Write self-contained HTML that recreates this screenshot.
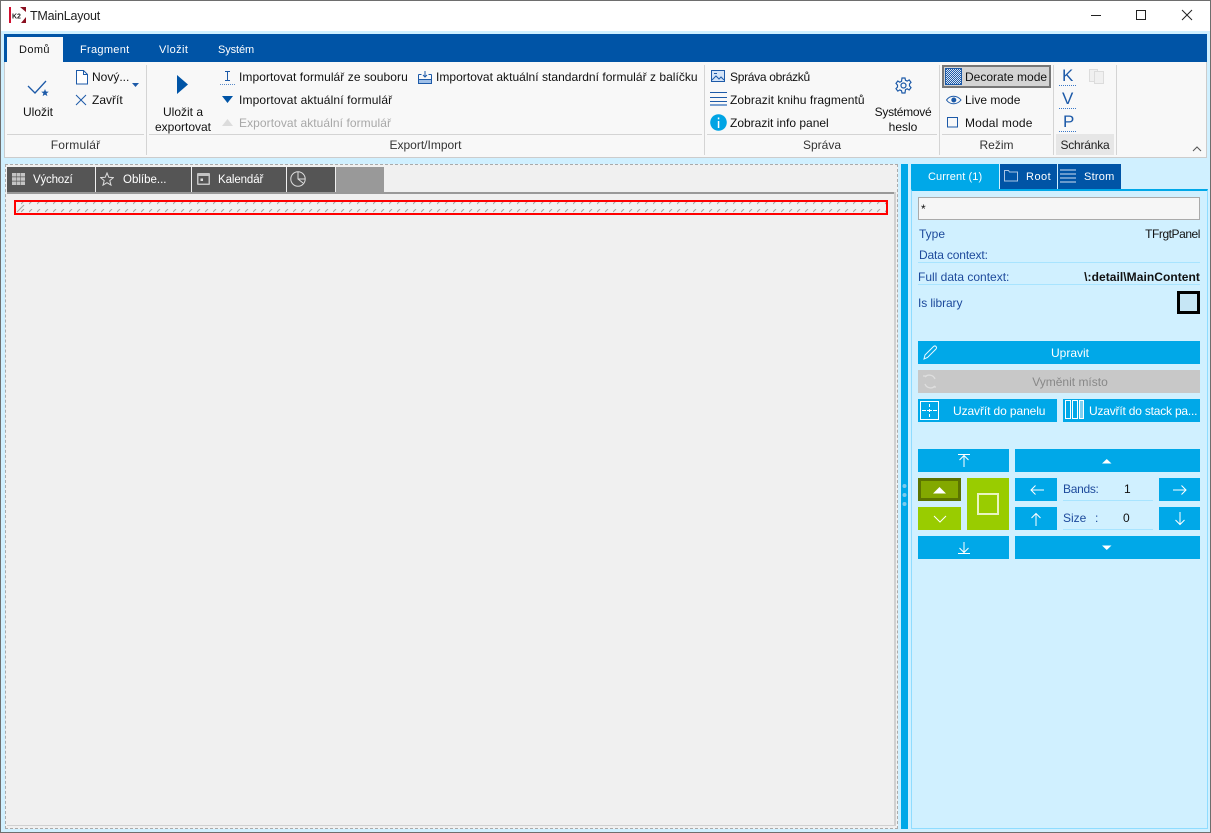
<!DOCTYPE html>
<html><head><meta charset="utf-8"><title>TMainLayout</title>
<style>
html,body{margin:0;padding:0}
body{width:1211px;height:833px;position:relative;overflow:hidden;background:#d0f0ff;font:12px "Liberation Sans",sans-serif;color:#111}
.b,.t,svg{position:absolute}
.t{white-space:nowrap;line-height:16px;height:16px}
.c{text-align:center}
.w{color:#fff}
.l{color:#1d4a9c}
.d{color:#a8a8a8}
</style></head><body>
<div class="b" style="left:0;top:0;width:1209px;height:831px;border:1px solid #6e6e6e"></div>
<div class="b" style="left:1px;top:1px;width:1209px;height:30px;background:#fff"></div>
<svg style="left:9px;top:7px" width="17" height="16"><rect width="2" height="16" fill="#d01030"/><rect x="2" width="15" height="16" fill="#fff"/><path d="M11 0h6v5zM12 16h5v-6z" fill="#8a1020"/><text x="3" y="11.500" font-family="Liberation Sans" font-weight="bold" font-size="7" fill="#222">K2</text></svg>
<div class="t" style="left:30px;top:8px;font-size:12.500px;color:#222;letter-spacing:-.2px">TMainLayout</div>
<svg style="left:1085px;top:5px" width="116" height="20" fill="none" stroke="#222"><path d="M6 10.500h10"/><rect x="51.500" y="5.500" width="9" height="9"/><path d="M97 5l10 10M107 5l-10 10"/></svg>

<!-- ribbon -->
<div class="b" style="left:4px;top:34px;width:1203px;height:28px;background:#0054a6"></div>
<div class="b" style="left:7px;top:37px;width:56px;height:25px;background:#f8f8f8"></div>
<div class="b" style="left:4px;top:62px;width:1203px;height:95px;background:#f8f8f8;border-bottom:1px solid #ccc"></div>
<div class="b" style="left:4px;top:62px;width:1px;height:96px;background:#ccc"></div>
<div class="b" style="left:1206px;top:62px;width:1px;height:96px;background:#ccc"></div>
<div class="t" style="left:19px;top:42px;font-size:11px;color:#111;letter-spacing:.4px">Domů</div>
<div class="t w" style="left:80px;top:42px;font-size:11px;letter-spacing:.3px">Fragment</div>
<div class="t w" style="left:159px;top:42px;font-size:11px;letter-spacing:.4px">Vložit</div>
<div class="t w" style="left:218px;top:42px;font-size:11px;letter-spacing:-.1px">Systém</div>

<!-- group separators -->
<div class="b" style="left:146px;top:65px;width:1px;height:90px;background:#d4d4d4"></div>
<div class="b" style="left:704px;top:65px;width:1px;height:90px;background:#d4d4d4"></div>
<div class="b" style="left:939px;top:65px;width:1px;height:90px;background:#d4d4d4"></div>
<div class="b" style="left:1053px;top:65px;width:1px;height:90px;background:#d4d4d4"></div>
<div class="b" style="left:1116px;top:65px;width:1px;height:90px;background:#d4d4d4"></div>
<div class="b" style="left:7px;top:134px;width:137px;height:1px;background:#d4d4d4"></div>
<div class="b" style="left:149px;top:134px;width:553px;height:1px;background:#d4d4d4"></div>
<div class="b" style="left:707px;top:134px;width:230px;height:1px;background:#d4d4d4"></div>
<div class="b" style="left:942px;top:134px;width:109px;height:1px;background:#d4d4d4"></div>
<div class="b" style="left:1056px;top:134px;width:58px;height:21px;background:#e6e6e6"></div>

<div class="t c" style="left:7px;top:137px;width:137px;color:#333;letter-spacing:.2px">Formulář</div>
<div class="t c" style="left:149px;top:137px;width:553px;color:#333">Export/Import</div>
<div class="t c" style="left:707px;top:137px;width:230px;color:#333">Správa</div>
<div class="t c" style="left:942px;top:137px;width:109px;color:#333">Režim</div>
<div class="t c" style="left:1056px;top:137px;width:58px;color:#222;letter-spacing:-.2px">Schránka</div>
<svg style="left:1191px;top:143px" width="12" height="10" fill="none" stroke="#555"><path d="M2 8l4-4 4 4"/></svg>

<!-- Formular -->
<svg style="left:26px;top:78px" width="26" height="20" fill="none"><path d="M2 8l7 7L20 3" stroke="#1d5aa8" stroke-width="1.300"/><path d="M19 11l1 2.500 2.800.200-2.200 1.700.8 2.700-2.400-1.500-2.400 1.500.8-2.700-2.200-1.700 2.800-.200z" fill="#1d5aa8"/></svg>
<div class="t c" style="left:8px;top:104px;width:60px">Uložit</div>
<svg style="left:75px;top:70px" width="14" height="15" fill="#fff" stroke="#1d5aa8"><path d="M1.500.5h7l4 4v9.500h-11z"/><path d="M8.500.5v4h4" fill="none"/></svg>
<div class="t" style="left:92px;top:69px">Nový...</div>
<svg style="left:132px;top:83px" width="8" height="5"><path d="M0 0h7l-3.500 4z" fill="#1d5aa8"/></svg>
<svg style="left:75px;top:94px" width="12" height="12" stroke="#1d5aa8" fill="none"><path d="M1 1l10 10M11 1L1 11"/></svg>
<div class="t" style="left:92px;top:92px">Zavřít</div>

<!-- Export -->
<svg style="left:176px;top:75px" width="13" height="20"><path d="M1 0l11 9.500L1 19z" fill="#0054a6"/></svg>
<div class="t c" style="left:148px;top:104px;width:70px">Uložit a</div>
<div class="t c" style="left:148px;top:119px;width:70px">exportovat</div>
<svg style="left:220px;top:70px" width="16" height="16" fill="none"><path d="M5 1.500h5M7.500 1.500v9M5 10.500h5" stroke="#1d5aa8"/><path d="M0 14.500h15" stroke="#5a8ac8" stroke-dasharray="1 1"/></svg>
<div class="t" style="left:239px;top:69px;letter-spacing:.07px">Importovat formulář ze souboru</div>
<svg style="left:222px;top:96px" width="12" height="8"><path d="M0 0h11l-5.500 7z" fill="#0054a6"/></svg>
<div class="t" style="left:239px;top:92px;letter-spacing:.14px">Importovat aktuální formulář</div>
<svg style="left:222px;top:119px" width="12" height="8"><path d="M0 7h11L5.500 0z" fill="#dcdcdc"/></svg>
<div class="t d" style="left:239px;top:115px;letter-spacing:.07px">Exportovat aktuální formulář</div>
<svg style="left:418px;top:70px" width="14" height="14" fill="none" stroke="#1d5aa8"><path d="M.5 4.500h3M13.500 4.500h-3M.5 4.500v9h13v-9"/><rect x="1" y="10" width="12" height="3" fill="#a0c0e8" stroke="none"/><path d="M.5 9.500h13M7 1v6M5 5l2 2 2-2"/></svg>
<div class="t" style="left:436px;top:69px;letter-spacing:.03px">Importovat aktuální standardní formulář z balíčku</div>

<!-- Sprava -->
<svg style="left:711px;top:70px" width="15" height="13" fill="#d4e4f8" stroke="#1d5aa8"><rect x=".5" y=".5" width="13" height="11"/><path d="M1 10l4-4 3 3 2-2 3 3" fill="none"/><path d="M3 3.500h3" fill="none"/></svg>
<div class="t" style="left:730px;top:69px;letter-spacing:-.3px">Správa obrázků</div>
<svg style="left:710px;top:92px" width="18" height="15"><path d="M0 .5h17" stroke="#1d5aa8"/><path d="M0 5.500h17" stroke="#1d5aa8"/><path d="M0 9.500h17" stroke="#1d5aa8"/><path d="M0 13h17" stroke="#7aa0d0" stroke-width="2"/></svg>
<div class="t" style="left:730px;top:92px;letter-spacing:.08px">Zobrazit knihu fragmentů</div>
<svg style="left:710px;top:114px" width="17" height="17"><circle cx="8.500" cy="8.500" r="8.300" fill="#00a4e4"/><rect x="7.800" y="7" width="1.500" height="7" fill="#fff"/><rect x="7.800" y="3.500" width="1.500" height="1.800" fill="#fff"/></svg>
<div class="t" style="left:730px;top:115px">Zobrazit info panel</div>
<svg style="left:895px;top:77px" width="17" height="17" fill="none" stroke="#1d5aa8" stroke-width="1.200"><circle cx="8.500" cy="8.500" r="2.500"/><path d="M7 1h3l.5 2.300 1.700.8 2-1.200 1.800 2.400-1.500 1.700v1.900l1.500 1.700-1.800 2.400-2-1.200-1.700.8L10 16H7l-.5-2.300-1.700-.8-2 1.200L1 11.700l1.500-1.700V8.100L1 6.400l1.800-2.400 2 1.200 1.700-.8z"/></svg>
<div class="t c" style="left:868px;top:104px;width:70px;letter-spacing:-.3px">Systémové</div>
<div class="t c" style="left:868px;top:119px;width:70px">heslo</div>

<!-- Rezim -->
<div class="b" style="left:942px;top:65px;width:105px;height:19px;background:#d4d4d4;border:2px solid #777"></div>
<svg style="left:945px;top:68px" width="17" height="17"><defs><pattern id="p" width="2" height="2" patternUnits="userSpaceOnUse"><rect width="2" height="2" fill="#d8e4f4"/><rect width="1" height="1" fill="#1d5aa8"/><rect x="1" y="1" width="1" height="1" fill="#1d5aa8"/></pattern></defs><rect x=".5" y=".5" width="16" height="16" fill="url(#p)" stroke="#1d5aa8"/></svg>
<div class="t" style="left:965px;top:69px">Decorate mode</div>
<svg style="left:946px;top:94px" width="16" height="12" fill="none" stroke="#1d5aa8"><path d="M.5 6C4 1 11 1 15 6 11 11 4 11 .5 6z"/><circle cx="7.800" cy="6" r="2" fill="#1d5aa8"/></svg>
<div class="t" style="left:965px;top:92px">Live mode</div>
<svg style="left:947px;top:117px" width="12" height="11"><rect x=".5" y=".5" width="10" height="9.500" fill="none" stroke="#1d5aa8"/></svg>
<div class="t" style="left:965px;top:115px;letter-spacing:.15px">Modal mode</div>

<!-- Schranka -->
<div class="t" style="left:1062px;top:68px;font-size:17px;color:#1d5aa8">K</div>
<div class="t" style="left:1062px;top:91px;font-size:17px;color:#1d5aa8">V</div>
<div class="t" style="left:1063px;top:114px;font-size:17px;color:#1d5aa8">P</div>
<svg style="left:1059px;top:85px" width="18" height="48" stroke="#3a78c8" fill="none" stroke-dasharray="1 1"><path d="M0 .5h17M0 23.500h17M0 46.500h17"/></svg>
<svg style="left:1089px;top:69px" width="16" height="15" fill="#f0f0f0" stroke="#dcdcdc"><rect x=".5" y=".5" width="8" height="12"/><rect x="5.500" y="2.500" width="9" height="12"/></svg>

<!-- Left panel -->
<div class="b" style="left:5px;top:164px;width:891px;height:663px;background:#f0f0f0;border:1px dashed #aaa"></div>
<div class="b" style="left:7px;top:192px;width:888px;height:2px;background:#999"></div>
<div class="b" style="left:894px;top:192px;width:2px;height:634px;background:#d0d0d0"></div>
<div class="b" style="left:7px;top:825px;width:888px;height:1px;background:#d0d0d0"></div>
<div class="b" style="left:7px;top:167px;width:88px;height:25px;background:#555"></div>
<div class="b" style="left:96px;top:167px;width:95px;height:25px;background:#555"></div>
<div class="b" style="left:192px;top:167px;width:94px;height:25px;background:#555"></div>
<div class="b" style="left:287px;top:167px;width:48px;height:25px;background:#555"></div>
<div class="b" style="left:336px;top:167px;width:48px;height:25px;background:#999"></div>
<svg style="left:12px;top:173px" width="13" height="12" fill="#c4c4c4"><path d="M0 0h4v3.500H0zM4.500 0h4v3.500h-4zM9 0h4v3.500H9zM0 4.300h4v3.500H0zM4.500 4.300h4v3.500h-4zM9 4.300h4v3.500H9zM0 8.500h4V12H0zM4.500 8.500h4V12h-4zM9 8.500h4V12H9z"/></svg>
<div class="t w" style="left:33px;top:172px;font-size:11.500px;letter-spacing:-.2px">Výchozí</div>
<svg style="left:100px;top:172px" width="14" height="14" fill="none" stroke="#ddd"><path d="M7 1l1.800 4.300 4.600.3-3.600 3 1.200 4.500L7 10.700 3 13.100l1.200-4.500-3.600-3 4.600-.3z"/></svg>
<div class="t w" style="left:123px;top:172px;font-size:11.500px">Oblíbe...</div>
<svg style="left:197px;top:172px" width="13" height="13"><rect y="1" width="13" height="12" rx="1" fill="#c4c4c4"/><rect x="1.500" y="4" width="10" height="7.500" fill="#555"/><rect x="3.500" y="6.500" width="2.500" height="2.500" fill="#ddd"/></svg>
<div class="t w" style="left:218px;top:172px;font-size:11.500px;letter-spacing:-.1px">Kalendář</div>
<svg style="left:290px;top:171px" width="16" height="16" fill="none" stroke="#ddd"><circle cx="8" cy="8" r="7.200"/><path d="M8 1v7l5 4M8 8h7"/></svg>

<!-- hatch -->
<svg style="left:14px;top:200px" width="874" height="15"><defs><pattern id="h" width="8" height="8" patternUnits="userSpaceOnUse" patternTransform="translate(7 1)"><path d="M0 3l3-3" stroke="#a4a4a4"/></pattern></defs><rect width="874" height="15" fill="#f0f0f0"/><rect width="874" height="15" fill="url(#h)"/><path d="M3 12l7-7" stroke="#a4a4a4"/><rect x="1" y="1" width="872" height="13" fill="none" stroke="#f00" stroke-width="2"/></svg>

<!-- Splitter -->
<div class="b" style="left:901px;top:164px;width:7px;height:665px;background:#00a8e8"></div>
<svg style="left:902px;top:483px" width="5" height="24" fill="#7ccbee"><circle cx="2.500" cy="3" r="2"/><circle cx="2.500" cy="12" r="2"/><circle cx="2.500" cy="21" r="2"/></svg>

<!-- Right panel -->
<div class="b" style="left:911px;top:189px;width:295px;height:637px;border:1px solid #8fdcff;border-top:2px solid #00a8e8"></div>
<div class="b" style="left:911px;top:164px;width:88px;height:25px;background:#00a8e8"></div>
<div class="b" style="left:1000px;top:164px;width:57px;height:25px;background:#0054a6"></div>
<div class="b" style="left:1058px;top:164px;width:63px;height:25px;background:#0054a6"></div>
<div class="t w" style="left:928px;top:169px;font-size:11px;letter-spacing:.1px">Current (1)</div>
<svg style="left:1004px;top:169px" width="14" height="13" fill="none" stroke="#a8c4e4"><path d="M.5 1.500h4l1 1.500h8v9H.5z"/></svg>
<div class="t w" style="left:1026px;top:169px;font-size:11px;letter-spacing:.5px">Root</div>
<svg style="left:1060px;top:169px" width="17" height="15" stroke="#a8c4e4"><path d="M0 1h16M0 5h16M0 9h16M0 13h16" stroke-width="1.300"/></svg>
<div class="t w" style="left:1084px;top:169px;font-size:11px;letter-spacing:.25px">Strom</div>

<div class="b" style="left:918px;top:197px;width:280px;height:21px;background:#f6f6f6;border:1px solid #aaa"></div>
<div class="t" style="left:921px;top:201px">*</div>
<div class="t l" style="left:919px;top:226px">Type</div>
<div class="t" style="right:11px;top:226px;letter-spacing:-.45px">TFrgtPanel</div>
<div class="t l" style="left:919px;top:247px;letter-spacing:-.15px">Data context:</div>
<div class="b" style="left:918px;top:262px;width:282px;height:1px;background:#a8e4ff"></div>
<div class="t l" style="left:918px;top:269px">Full data context:</div>
<div class="t" style="right:11px;top:269px;font-weight:bold;letter-spacing:.06px">\:detail\MainContent</div>
<div class="b" style="left:918px;top:284px;width:282px;height:1px;background:#a8e4ff"></div>
<div class="t l" style="left:918px;top:295px;letter-spacing:-.1px">Is library</div>
<div class="b" style="left:1177px;top:291px;width:17px;height:17px;border:3px solid #000;background:#c6e6f5"></div>

<div class="b" style="left:918px;top:341px;width:282px;height:23px;background:#00a8e8"></div>
<svg style="left:922px;top:345px" width="17" height="16" fill="none" stroke="#e8f8ff"><path d="M2 14l1-4 8.500-8.500c1-.8 2-.5 2.500 0s.8 1.500 0 2.500L5.500 12.500z"/></svg>
<div class="t w c" style="left:918px;top:345px;width:304px">Upravit</div>
<div class="b" style="left:918px;top:370px;width:282px;height:23px;background:#c8c8c8"></div>
<svg style="left:922px;top:374px" width="16" height="15" fill="none" stroke="#dedede" stroke-width="1.300"><path d="M3 3a6 6 0 0 1 10 2M13 12a6 6 0 0 1-10-2"/><path d="M1 2h4M14 13h-3"/></svg>
<div class="t c" style="left:918px;top:374px;width:304px;color:#888">Vyměnit místo</div>
<div class="b" style="left:918px;top:399px;width:139px;height:23px;background:#00a8e8"></div>
<svg style="left:920px;top:401px" width="19" height="19" fill="none" stroke="#fff"><rect x=".5" y=".5" width="18" height="18"/><path d="M9.500 3v3M9.500 8v3M9.500 13v3M2 9.500h4M7 9.500h5M13 9.500h4"/></svg>
<div class="t w" style="left:953px;top:403px;letter-spacing:-.1px">Uzavřít do panelu</div>
<div class="b" style="left:1063px;top:399px;width:137px;height:23px;background:#00a8e8"></div>
<svg style="left:1065px;top:400px" width="20" height="20" fill="none" stroke="#fff"><rect x=".5" y=".5" width="5" height="18"/><rect x="7.500" y=".5" width="5" height="18"/><rect x="14.500" y=".5" width="4" height="18" fill="#7fd0f0"/></svg>
<div class="t w" style="left:1089px;top:403px;letter-spacing:-.2px">Uzavřít do stack pa...</div>

<!-- Nav buttons -->
<div class="b" style="left:918px;top:449px;width:91px;height:23px;background:#00a8e8"></div>
<svg style="left:957px;top:453px" width="14" height="15" fill="none" stroke="#fff"><path d="M1 1.500h12M7 14V2.500M2.500 7L7 2.500 11.500 7"/></svg>
<div class="b" style="left:1015px;top:449px;width:185px;height:23px;background:#00a8e8"></div>
<svg style="left:1102px;top:458px" width="10" height="6"><path d="M0 5.500h9.500L4.750 1z" fill="#fff"/></svg>

<div class="b" style="left:918px;top:478px;width:37px;height:17px;background:#83a800;border:3px solid #5c7400"></div>
<svg style="left:933px;top:486px" width="14" height="8"><path d="M0 7.500h13L6.500 1z" fill="#fff"/></svg>
<div class="b" style="left:918px;top:507px;width:43px;height:23px;background:#9c0"></div>
<svg style="left:933px;top:515px" width="14" height="9" fill="none" stroke="#fff"><path d="M1 1l6 6 6-6"/></svg>
<div class="b" style="left:967px;top:478px;width:42px;height:52px;background:#9c0"></div>
<div class="b" style="left:977px;top:493px;width:18px;height:18px;border:2px solid #e8f4c0"></div>

<div class="b" style="left:1015px;top:478px;width:42px;height:23px;background:#00a8e8"></div>
<svg style="left:1030px;top:484px" width="14" height="12" fill="none" stroke="#fff"><path d="M14 6H1M5.500 1.500L1 6l4.500 4.500"/></svg>
<div class="b" style="left:1015px;top:507px;width:42px;height:23px;background:#00a8e8"></div>
<svg style="left:1030px;top:512px" width="12" height="14" fill="none" stroke="#fff"><path d="M6 14V1.500M1.500 6L6 1.500 10.500 6"/></svg>
<div class="b" style="left:1159px;top:478px;width:41px;height:23px;background:#00a8e8"></div>
<svg style="left:1173px;top:484px" width="14" height="12" fill="none" stroke="#fff"><path d="M0 6h13M8.500 1.500L13 6l-4.500 4.500"/></svg>
<div class="b" style="left:1159px;top:507px;width:41px;height:23px;background:#00a8e8"></div>
<svg style="left:1174px;top:512px" width="12" height="14" fill="none" stroke="#fff"><path d="M6 0v12.500M1.500 8L6 12.500 10.500 8"/></svg>

<div class="t l" style="left:1063px;top:481px;letter-spacing:-.3px">Bands:</div>
<div class="t" style="left:1124px;top:481px">1</div>
<div class="b" style="left:1063px;top:500px;width:90px;height:1px;background:#a8e4ff"></div>
<div class="t l" style="left:1063px;top:510px">Size</div>
<div class="t l" style="left:1095px;top:510px">:</div>
<div class="t" style="left:1123px;top:510px">0</div>
<div class="b" style="left:1063px;top:529px;width:90px;height:1px;background:#a8e4ff"></div>

<div class="b" style="left:918px;top:536px;width:91px;height:23px;background:#00a8e8"></div>
<svg style="left:957px;top:541px" width="14" height="15" fill="none" stroke="#fff"><path d="M1 12.500h12M7 1v10.500M2.500 7L7 11.500 11.500 7"/></svg>
<div class="b" style="left:1015px;top:536px;width:185px;height:23px;background:#00a8e8"></div>
<svg style="left:1102px;top:545px" width="10" height="6"><path d="M0 .5h9.500L4.750 5z" fill="#fff"/></svg>
</body></html>
